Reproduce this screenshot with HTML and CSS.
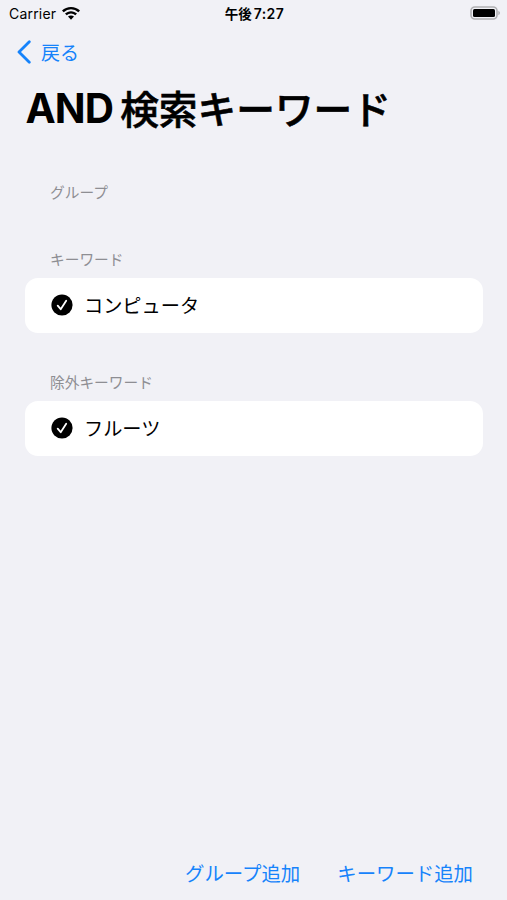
FILE: index.html
```html
<!DOCTYPE html>
<html lang="ja">
<head>
<meta charset="utf-8">
<title>AND検索キーワード</title>
<link rel="stylesheet" href="styles.css">
</head>
<body>
<div class="screen">
  <header class="status">
    <div class="carrier"><span>Carrier</span>
      <svg class="wifi" viewBox="0 0 18 13"><path d="M9 0C5.500 0 2.400 1.300 0 3.600L1.700 5.300A10.400 10.400 0 0 1 16.300 5.300L18 3.600C15.600 1.300 12.500 0 9 0ZM9 4.200C6.700 4.200 4.600 5.100 3 6.600L4.700 8.300A6.200 6.200 0 0 1 13.300 8.300L15 6.600C13.400 5.100 11.300 4.200 9 4.200ZM9 8.400C7.800 8.400 6.800 8.800 6 9.600L9 12.700L12 9.600C11.200 8.800 10.200 8.400 9 8.400Z"/></svg>
    </div>
    <div class="time"><span class="ampm">午後</span><span class="clock">7:27</span></div>
    <svg class="battery" viewBox="0 0 30 14"><rect x="1" y="1" width="26" height="12" rx="3.800" fill="none" stroke="#b0b0b3" stroke-width="1.600"/><rect x="3" y="3" width="22" height="8" rx="1.500"/><path d="M28.300 4.800Q30 5.500 30 7T28.300 9.200Z" fill="#b0b0b3"/></svg>
  </header>
  <nav class="nav"><a class="back"><svg class="chevron" viewBox="0 0 14 24"><path d="M12.300 1.700L2 12L12.300 22.300"/></svg><span>戻る</span></a></nav>
  <h1 class="title"><span class="latin">AND</span><span class="kanji">検索キーワード</span></h1>
  <main class="groups">
    <section class="group empty"><h2>グループ</h2></section>
    <section class="group"><h2>キーワード</h2>
      <div class="card"><svg class="check" viewBox="0 0 22 22"><circle cx="11" cy="11" r="10.600"/><path d="M6.700 11.700L9.700 15.200L15.200 6.700"/></svg><span>コンピュータ</span></div>
    </section>
    <section class="group"><h2>除外キーワード</h2>
      <div class="card"><svg class="check" viewBox="0 0 22 22"><circle cx="11" cy="11" r="10.600"/><path d="M6.700 11.700L9.700 15.200L15.200 6.700"/></svg><span>フルーツ</span></div>
    </section>
  </main>
  <footer class="toolbar"><a>グループ追加</a><a>キーワード追加</a></footer>
</div>
</body>
</html>
```
FILE: styles.css
```css
* { box-sizing: border-box; }
body { margin: 0; background: #f1f1f6; color: #000; font-family: Inter, "Noto Sans CJK JP", sans-serif; font-weight: 400; }
.screen { height: 900px; display: flex; flex-direction: column; overflow: hidden; }
.status { height: 27px; display: grid; grid-template-columns: 1fr auto 1fr; align-items: center; padding: 0 7px 0 9px; font-size: 14px; line-height: 27px; }
.carrier { display: flex; align-items: center; gap: 6px; letter-spacing: .2px; }
.wifi { width: 18px; height: 13px; margin-bottom: 1px; }
.time { display: flex; gap: 2px; font-weight: 600; }
.ampm { font-weight: 700; font-size: 13.500px; padding-top: 1px; line-height: 26px; }
.clock { letter-spacing: .4px; }
.battery { width: 30px; height: 14px; justify-self: end; margin-bottom: 1px; }
.nav { height: 50px; padding-left: 17px; display: flex; align-items: center; }
.back { display: flex; align-items: center; gap: 10px; color: #1683fb; font-size: 19px; }
.back span { padding-bottom: 2px; }
.chevron { width: 14px; height: 24px; fill: none; stroke: #1683fb; stroke-width: 2.800; stroke-linecap: round; stroke-linejoin: round; }
.title { margin: 0; height: 62px; padding-left: 25.500px; display: flex; align-items: center; gap: 7px; font-size: 38.700px; font-weight: 700; white-space: nowrap; }
.latin { font-size: 40.500px; letter-spacing: -.9px; padding-top: 1px; }
.kanji { padding-bottom: 3px; font-weight: 500; -webkit-text-stroke: .6px #000; }
.groups { flex: 1; padding: 39px 24px 0 25px; }
.group { height: 123px; }
.group.empty { height: 67px; }
.group h2 { margin: 0; height: 33px; padding-left: 25px; line-height: 30px; color: #8e8e93; font-size: 14.700px; font-weight: 400; }
.card { height: 55px; padding: 0 0 1px 26px; display: flex; align-items: center; gap: 11px; background: #fff; border-radius: 13px; font-size: 19.200px; }
.card span { padding-bottom: 1px; }
.check { width: 22px; height: 22px; }
.check path { fill: none; stroke: #fff; stroke-width: 1.800; stroke-linecap: round; stroke-linejoin: round; }
.toolbar { height: 54px; padding: 0 34px 2px 0; display: flex; justify-content: flex-end; align-items: center; gap: 37px; color: #1683fb; font-size: 19.400px; }
```
